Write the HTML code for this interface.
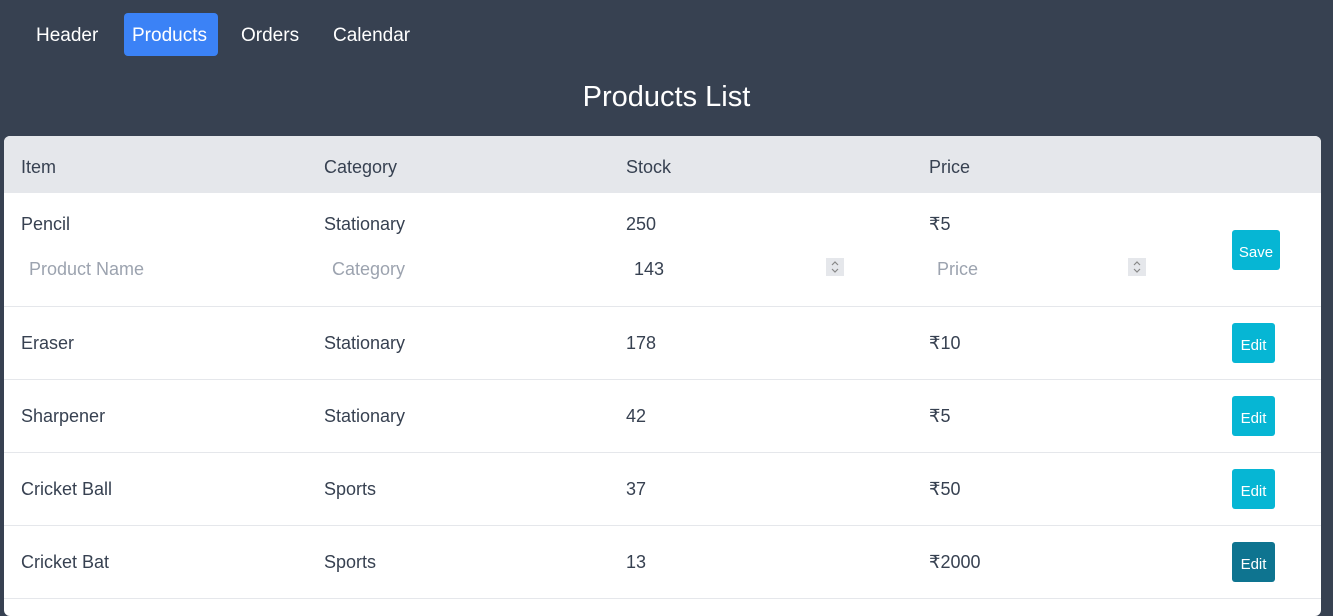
<!DOCTYPE html>
<html><head><style>
*{margin:0;padding:0;box-sizing:border-box}
body{width:1333px;height:607px;overflow:hidden;background:#374151;font-family:"Segoe UI","Liberation Sans","Noto Sans CJK SC",sans-serif;position:relative}
.nav{position:absolute;top:13px;height:43px;line-height:46px;color:#fff;font-size:19px;padding:0 8px;border-radius:4px}
.title{position:absolute;top:77px;left:0;width:1333px;text-align:center;color:#fff;font-size:29px;line-height:40px}
.card{position:absolute;left:4px;top:136px;width:1317px;height:480px;background:#fff;border-radius:6px;overflow:hidden}
.head{position:absolute;left:0;top:0;width:100%;height:57px;background:#e5e7eb}
.t{position:absolute;font-size:18px;color:#374151;line-height:24px;white-space:nowrap}
.ph{color:#9ca3af}
.line{position:absolute;left:0;width:100%;height:1px;background:#e5e7eb}
.btn{position:absolute;background:#06b6d4;color:#fff;font-size:15px;border-radius:3px;text-align:center;padding-top:3px}
.spin{position:absolute;width:18px;height:18px;background:#e5e7eb}
</style></head><body>
<div class="nav" style="left:28px">Header</div>
<div class="nav" style="left:124px;width:94px;background:#3b82f6">Products</div>
<div class="nav" style="left:233px">Orders</div>
<div class="nav" style="left:325px">Calendar</div>
<div class="title">Products List</div>
<div class="card">
<div class="head"></div>
<div class="t" style="left:17px;top:19px">Item</div>
<div class="t" style="left:320px;top:19px">Category</div>
<div class="t" style="left:622px;top:19px">Stock</div>
<div class="t" style="left:925px;top:19px">Price</div>

<div class="t" style="left:17px;top:76px">Pencil</div>
<div class="t" style="left:320px;top:76px">Stationary</div>
<div class="t" style="left:622px;top:76px">250</div>
<div class="t" style="left:925px;top:76px">₹5</div>
<div class="t ph" style="left:25px;top:121px">Product Name</div>
<div class="t ph" style="left:328px;top:121px">Category</div>
<div class="t" style="left:630px;top:121px">143</div>
<svg class="spin" style="left:822px;top:122px" viewBox="0 0 18 18"><path d="M6 7l3-3 3 3M6 11l3 3 3-3" fill="none" stroke="#888" stroke-width="1.2"/></svg>
<div class="t ph" style="left:933px;top:121px">Price</div>
<svg class="spin" style="left:1124px;top:122px" viewBox="0 0 18 18"><path d="M6 7l3-3 3 3M6 11l3 3 3-3" fill="none" stroke="#888" stroke-width="1.2"/></svg>
<div class="btn" style="left:1228px;top:94px;width:48px;height:40px;line-height:40px">Save</div>
<div class="line" style="top:170px"></div>

<div class="t" style="left:17px;top:195px">Eraser</div>
<div class="t" style="left:320px;top:195px">Stationary</div>
<div class="t" style="left:622px;top:195px">178</div>
<div class="t" style="left:925px;top:195px">₹10</div>
<div class="btn" style="left:1228px;top:187px;width:43px;height:40px;line-height:40px">Edit</div>
<div class="line" style="top:243px"></div>

<div class="t" style="left:17px;top:268px">Sharpener</div>
<div class="t" style="left:320px;top:268px">Stationary</div>
<div class="t" style="left:622px;top:268px">42</div>
<div class="t" style="left:925px;top:268px">₹5</div>
<div class="btn" style="left:1228px;top:260px;width:43px;height:40px;line-height:40px">Edit</div>
<div class="line" style="top:316px"></div>

<div class="t" style="left:17px;top:341px">Cricket Ball</div>
<div class="t" style="left:320px;top:341px">Sports</div>
<div class="t" style="left:622px;top:341px">37</div>
<div class="t" style="left:925px;top:341px">₹50</div>
<div class="btn" style="left:1228px;top:333px;width:43px;height:40px;line-height:40px">Edit</div>
<div class="line" style="top:389px"></div>

<div class="t" style="left:17px;top:414px">Cricket Bat</div>
<div class="t" style="left:320px;top:414px">Sports</div>
<div class="t" style="left:622px;top:414px">13</div>
<div class="t" style="left:925px;top:414px">₹2000</div>
<div class="btn" style="left:1228px;top:406px;width:43px;height:40px;line-height:40px;background:#0e7490">Edit</div>
<div class="line" style="top:462px"></div>
</div>
</body></html>
